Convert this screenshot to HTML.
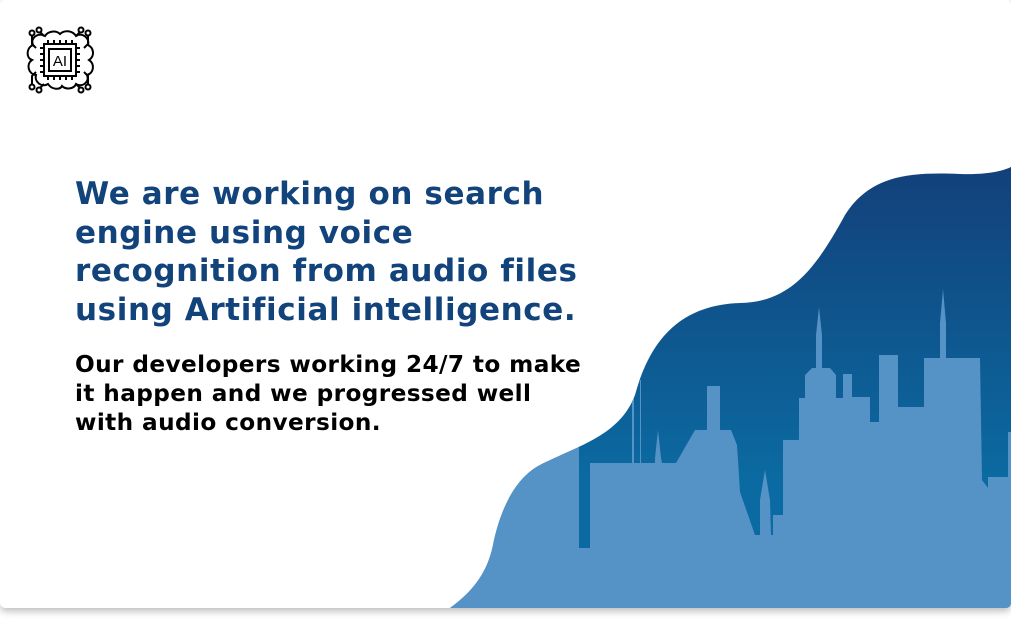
<!DOCTYPE html>
<html><head><meta charset="utf-8"><style>
html,body{margin:0;padding:0;background:#fff;width:1011px;height:629px;overflow:hidden}
.card{position:absolute;left:0;top:0;width:1011px;height:608px;background:#fff;border-radius:5px;box-shadow:0 3px 8px rgba(0,0,0,.28);overflow:hidden}
h1{position:absolute;left:75px;top:175px;margin:0;width:540px;font:bold 31px/38.5px "DejaVu Sans",sans-serif;color:#12437b;letter-spacing:.6px}
p{position:absolute;left:75px;top:350px;margin:0;width:512px;font:bold 23.2px/29px "DejaVu Sans",sans-serif;color:#000;letter-spacing:.4px}
svg{position:absolute;left:0;top:0}
</style></head><body>
<div class="card">
<svg width="1011" height="608" viewBox="0 0 1011 608">
<defs>
<linearGradient id="g" x1="0" y1="0" x2="0" y2="1" gradientUnits="objectBoundingBox">
<stop offset="0" stop-color="#13407a"/><stop offset="0.7" stop-color="#0b6aa1"/><stop offset="1" stop-color="#0b6aa1"/></linearGradient>
<clipPath id="c"><path d="M450,608 C475,590 488,570 493,545 C500,510 515,478 540,465 C580,445 620,435 635,395 C650,340 680,305 740,303 C790,302 815,270 845,215 C870,175 910,172 960,174 C990,175 1005,170 1011,167 L1011,608 Z"/></clipPath>
</defs>
<path d="M450,608 C475,590 488,570 493,545 C500,510 515,478 540,465 C580,445 620,435 635,395 C650,340 680,305 740,303 C790,302 815,270 845,215 C870,175 910,172 960,174 C990,175 1005,170 1011,167 L1011,608 Z" fill="url(#g)"/>
<g clip-path="url(#c)" fill="#5592c5">
<path d="M400,608 L400,420 L579,420 L579,548 L590,548 L590,463 L632,463 L632,380 L634,380 L634,463 L640,463 L640,380 L641,380 L641,463 L655,463 L655,458 L658,430 L661,458 L662,463 L676,463 L695,430 L707,430 L707,386 L720,386 L720,430 L731,430 L737,445 L738,460 L740,492 L755,535 L760,535 L760,500 L765,470 L770,500 L771,535 L773,535 L773,515 L783,515 L783,440 L799,440 L799,398 L805,398 L805,375 L812,368 L816,368 L816,335 L819,307 L822,335 L822,368 L830,368 L836,375 L836,398 L843,398 L843,374 L852,374 L852,397 L870,397 L870,422 L879,422 L879,355 L898,355 L898,407 L924,407 L924,358 L940,358 L940,323 L943,289 L946,323 L946,358 L980,358 L982,480 L988,488 L988,477 L1008,477 L1008,432 L1011,432 L1011,608 Z"/>
</g>
<g fill="none" stroke="#000" stroke-width="2">
<path d="M45,36 C38,32 30,38 33,45 C26,48 26,58 32,60 C26,64 28,74 36,75 C34,82 42,88 48,84 C52,90 60,90 62,86 C66,90 74,89 76,84 C82,88 90,82 87,75 C94,73 95,64 89,60 C95,56 94,48 88,45 C90,38 82,32 76,36 C72,30 64,30 60,34 C56,30 48,31 45,36 Z"/>
<rect x="44" y="44" width="32" height="32" fill="#fff"/>
<rect x="49" y="49" width="22" height="22"/>
<path d="M48,40v4M54,40v4M60,40v4M66,40v4M72,40v4M48,76v4M54,76v4M60,76v4M66,76v4M72,76v4M40,48h4M40,54h4M40,60h4M40,66h4M40,72h4M76,48h4M76,54h4M76,60h4M76,66h4M76,72h4"/>
<path d="M36,48 L32,44 L32,36 M84,48 L88,44 L88,36 M36,72 L32,76 L32,84 M84,72 L88,76 L88,84 M44,36 L40,32 M76,36 L80,32 M44,84 L40,88 M76,84 L80,88"/>
<circle cx="32" cy="33" r="2.5"/><circle cx="88" cy="33" r="2.5"/><circle cx="32" cy="87" r="2.5"/><circle cx="88" cy="87" r="2.5"/>
<circle cx="39" cy="30" r="2.5"/><circle cx="81" cy="30" r="2.5"/><circle cx="39" cy="90" r="2.5"/><circle cx="81" cy="90" r="2.5"/>
</g>
<text x="60" y="66" font-family="Liberation Sans,sans-serif" font-size="15" text-anchor="middle" fill="#000">AI</text>
</svg>
<h1>We are working on search engine using voice recognition from audio files using Artificial intelligence.</h1>
<p>Our developers working 24/7 to make it happen and we progressed well with audio conversion.</p>
</div>
</body></html>
